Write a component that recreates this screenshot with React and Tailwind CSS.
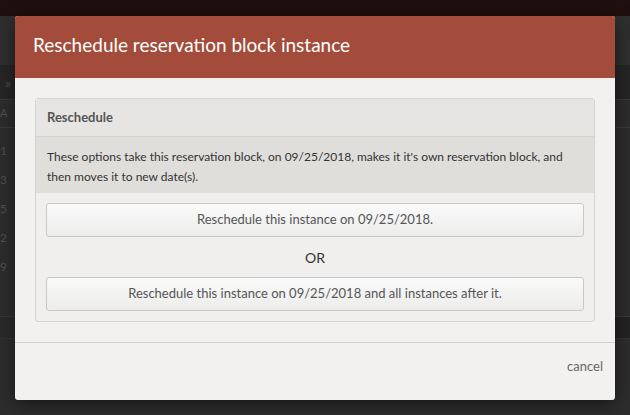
import React from 'react';

const rows = ['1', '3', '5', '2', '9'];

export default function App() {
  return (
    <div className="relative w-[630px] h-[415px] overflow-hidden bg-[#2d2d2d] font-['Lato','Liberation_Sans',sans-serif]">
      {/* page behind the modal */}
      <div className="flex flex-col h-full">
        <div className="h-[16px] bg-[#1f0f0e]" />
        <div className="h-[49px] bg-[#2f2f2f]" />
        <div className="h-[35px] bg-[#262626] border-b border-[#3a3a3a] flex items-center pl-[5px] text-[#505050] text-[14px]">»</div>
        <div className="h-[28px] border-b border-[#3a3a3a] flex items-center text-[#505050] text-[11px]">A</div>
        <div className="pt-[8px]">
          {rows.map((r) => (
            <div key={r} className="h-[29px] flex items-center text-[#505050] text-[12px]">{r}</div>
          ))}
        </div>
        <div className="h-[35px]" />
        <div className="h-[22px] border-t border-[#3a3a3a] bg-[#2b2b2b] flex justify-end">
          <div className="w-[20px] bg-[#232323]" />
        </div>
        <div className="flex-1 border-t border-[#353535]" />
      </div>

      {/* modal */}
      <div className="absolute left-[15px] top-[16px] w-[600px] h-[384px] rounded-[3px] overflow-hidden bg-[#f2f1ef] shadow-[0_4px_18px_rgba(0,0,0,0.5)] flex flex-col">
        <div className="h-[62px] bg-[#a34c3b] flex items-center px-[18px] pb-[3px]">
          <h2 className="text-[19px] text-white">Reschedule reservation block instance</h2>
        </div>
        <div className="px-[20px] pt-[20px] pb-[20px] border-b border-[#d2d0cd]">
          <div className="border border-[#d6d4d1] rounded-[3px] bg-[#f0efed]">
            <div className="h-[38px] bg-[#e6e5e3] border-b border-[#d6d4d1] flex items-center px-[11px] text-[13px] font-bold text-[#555]">
              Reschedule
            </div>
            <div className="bg-[#dfdedb] px-[11px] pt-[10px] pb-[6px] text-[12px] leading-[20px] text-[#333]">
              These options take this reservation block, on 09/25/2018, makes it it's own reservation block, and then moves it to new date(s).
            </div>
            <div className="px-[10px] py-[10px]">
              <button className="w-full h-[34px] rounded-[3px] border border-[#c9c8c6] bg-gradient-to-b from-[#fafafa] to-[#ececeb] text-[13px] text-[#555]">
                Reschedule this instance on 09/25/2018.
              </button>
              <div className="h-[40px] flex items-center justify-center text-[14px] text-[#333]">OR</div>
              <button className="w-full h-[34px] rounded-[3px] border border-[#c9c8c6] bg-gradient-to-b from-[#fafafa] to-[#ececeb] text-[13px] text-[#555]">
                Reschedule this instance on 09/25/2018 and all instances after it.
              </button>
            </div>
          </div>
        </div>
        <div className="flex-1 flex items-center justify-end px-[12px] pb-[10px]">
          <span className="text-[13px] text-[#666]">cancel</span>
        </div>
      </div>
    </div>
  );
}
